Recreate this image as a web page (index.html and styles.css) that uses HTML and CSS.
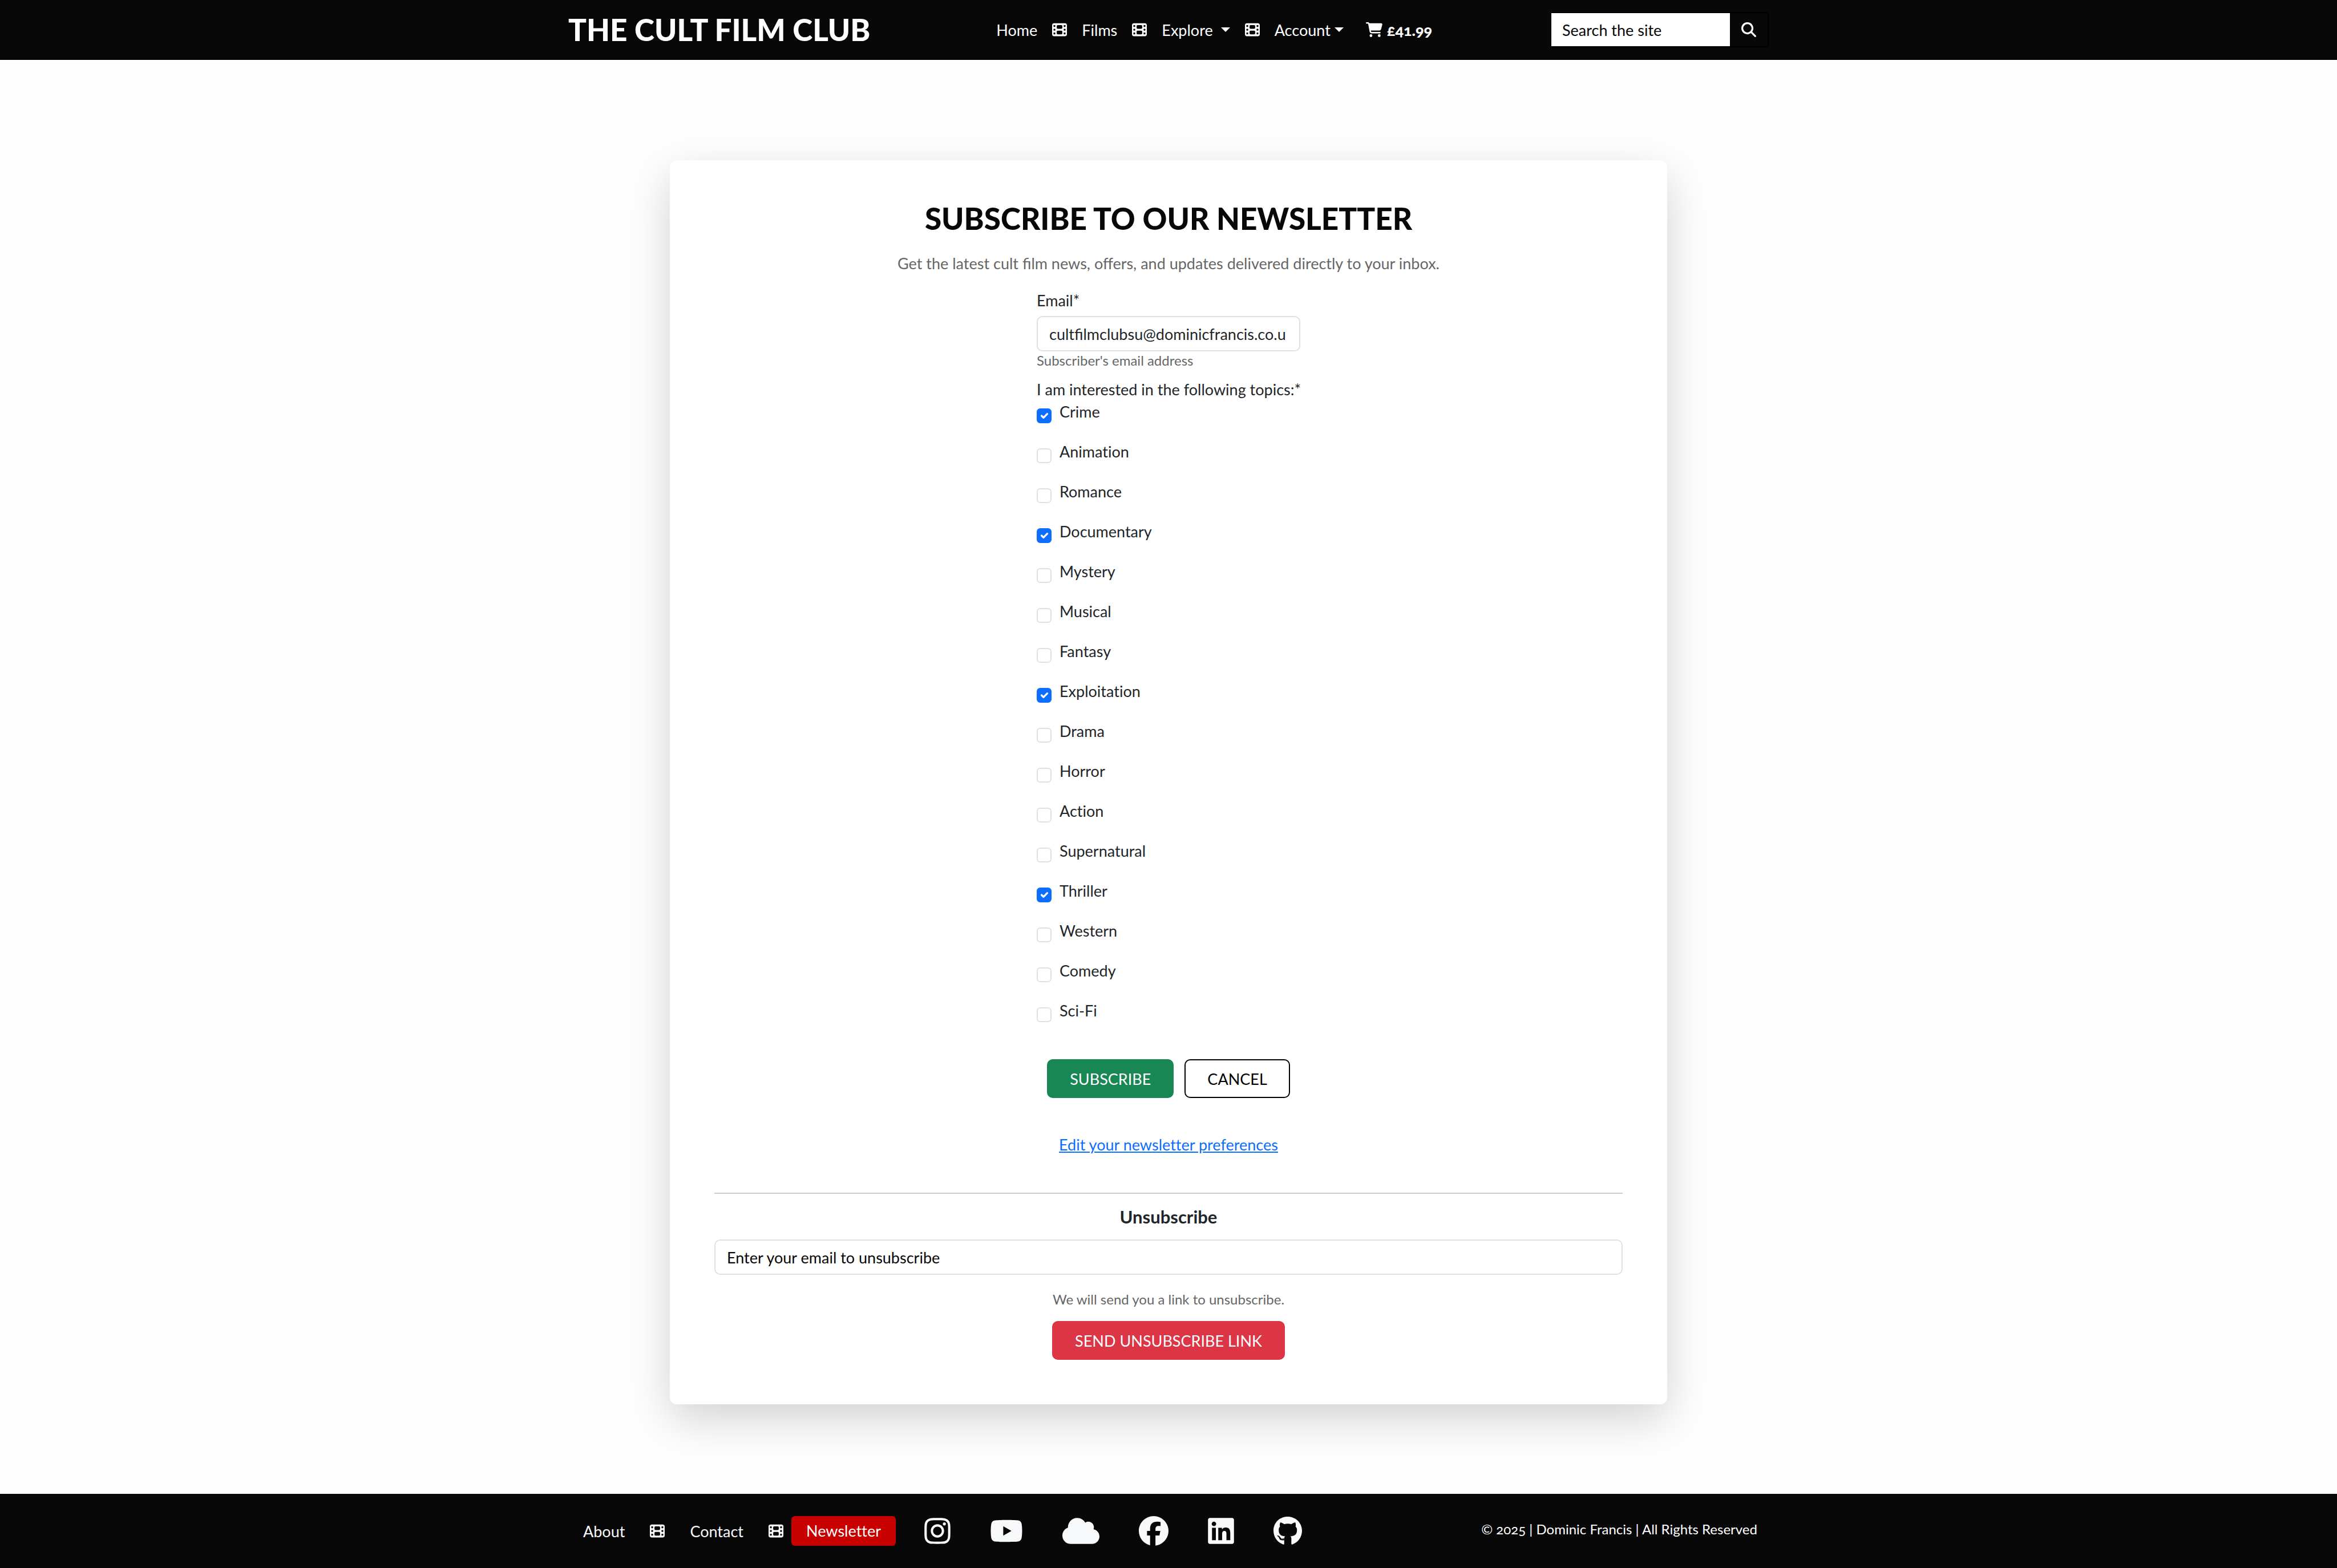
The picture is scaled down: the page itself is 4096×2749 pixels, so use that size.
FILE: index.html
```html
<!DOCTYPE html>
<html lang="en">
<head>
<meta charset="utf-8">
<meta name="viewport" content="width=device-width, initial-scale=1">
<title>Newsletter | The Cult Film Club</title>
<link rel="stylesheet" href="styles.css">
</head>
<body>
<svg class="sprite" aria-hidden="true">
  <symbol id="film" viewBox="0 0 512 512"><path fill-rule="evenodd" d="M0 96C0 60.700 28.700 32 64 32H448c35.300 0 64 28.700 64 64V416c0 35.300-28.700 64-64 64H64c-35.300 0-64-28.700-64-64V96zM48 368v32c0 8.800 7.200 16 16 16H96c8.800 0 16-7.200 16-16V368c0-8.800-7.200-16-16-16H64c-8.800 0-16 7.200-16 16zM416 352c-8.800 0-16 7.200-16 16v32c0 8.800 7.200 16 16 16h32c8.800 0 16-7.200 16-16V368c0-8.800-7.200-16-16-16H416zM48 240v32c0 8.800 7.200 16 16 16H96c8.800 0 16-7.200 16-16V240c0-8.800-7.200-16-16-16H64c-8.800 0-16 7.200-16 16zM416 224c-8.800 0-16 7.200-16 16v32c0 8.800 7.200 16 16 16h32c8.800 0 16-7.200 16-16V240c0-8.800-7.200-16-16-16H416zM48 112v32c0 8.800 7.200 16 16 16H96c8.800 0 16-7.200 16-16V112c0-8.800-7.200-16-16-16H64c-8.800 0-16 7.200-16 16zM416 96c-8.800 0-16 7.200-16 16v32c0 8.800 7.200 16 16 16h32c8.800 0 16-7.200 16-16V112c0-8.800-7.200-16-16-16H416zM160 128v64c0 17.700 14.300 32 32 32H320c17.700 0 32-14.300 32-32V128c0-17.700-14.300-32-32-32H192c-17.700 0-32 14.300-32 32zM192 288c-17.700 0-32 14.300-32 32v64c0 17.700 14.300 32 32 32H320c17.700 0 32-14.300 32-32V320c0-17.700-14.300-32-32-32H192z"/></symbol>
  <symbol id="cart" viewBox="0 0 576 512"><path d="M0 24C0 10.700 10.700 0 24 0H69.500c22 0 41.500 12.800 50.600 32h411c26.300 0 45.500 25 38.600 50.400l-41 152.300c-8.500 31.400-37 53.300-69.500 53.300H170.700l5.400 28.500c2.200 11.300 12.100 19.500 23.600 19.500H488c13.300 0 24 10.700 24 24s-10.700 24-24 24H199.700c-34.600 0-64.300-24.600-70.700-58.500L77.400 54.500c-.7-3.800-4-6.500-7.900-6.500H24C10.700 48 0 37.300 0 24zM128 464a48 48 0 1 1 96 0 48 48 0 1 1 -96 0zm336-48a48 48 0 1 1 0 96 48 48 0 1 1 0-96z"/></symbol>
  <symbol id="search" viewBox="0 0 512 512"><path fill-rule="evenodd" d="M416 208c0 45.900-14.900 88.300-40 122.700L502.600 457.400c12.500 12.500 12.500 32.800 0 45.300s-32.800 12.500-45.300 0L330.700 376c-34.400 25.200-76.800 40-122.700 40C93.100 416 0 322.900 0 208S93.100 0 208 0S416 93.100 416 208zM208 352a144 144 0 1 0 0-288 144 144 0 1 0 0 288z"/></symbol>
  <symbol id="instagram" viewBox="0 0 448 512"><path d="M224.100 141c-63.600 0-114.900 51.300-114.900 114.900s51.300 114.900 114.900 114.900S339 319.500 339 255.900 287.700 141 224.100 141zm0 189.600c-41.100 0-74.700-33.500-74.700-74.700s33.500-74.700 74.700-74.700 74.700 33.500 74.700 74.700-33.600 74.700-74.700 74.700zm146.400-194.300c0 14.900-12 26.800-26.800 26.800-14.900 0-26.800-12-26.800-26.800s12-26.800 26.800-26.800 26.800 12 26.800 26.800zm76.100 27.200c-1.700-35.900-9.900-67.700-36.200-93.900-26.200-26.200-58-34.400-93.900-36.200-37-2.100-147.900-2.100-184.900 0-35.800 1.700-67.600 9.900-93.900 36.100s-34.400 58-36.200 93.900c-2.100 37-2.100 147.900 0 184.900 1.700 35.900 9.900 67.700 36.200 93.900s58 34.400 93.900 36.200c37 2.100 147.900 2.100 184.900 0 35.900-1.700 67.700-9.900 93.900-36.200 26.200-26.200 34.400-58 36.200-93.900 2.100-37 2.100-147.800 0-184.800zM398.800 388c-7.800 19.600-22.900 34.700-42.600 42.600-29.500 11.700-99.500 9-132.100 9s-102.700 2.600-132.100-9c-19.600-7.800-34.700-22.900-42.600-42.600-11.700-29.500-9-99.500-9-132.100s-2.600-102.700 9-132.100c7.800-19.600 22.900-34.700 42.600-42.600 29.500-11.700 99.500-9 132.100-9s102.700-2.600 132.100 9c19.600 7.800 34.700 22.900 42.600 42.600 11.700 29.500 9 99.500 9 132.100s2.700 102.700-9 132.100z"/></symbol>
  <symbol id="youtube" viewBox="0 0 576 512"><path d="M549.655 124.083c-6.281-23.650-24.787-42.276-48.284-48.597C458.781 64 288 64 288 64S117.220 64 74.629 75.486c-23.497 6.322-42.003 24.947-48.284 48.597-11.412 42.867-11.412 132.305-11.412 132.305s0 89.438 11.412 132.305c6.281 23.650 24.787 41.500 48.284 47.821C117.220 448 288 448 288 448s170.780 0 213.371-11.486c23.497-6.321 42.003-24.171 48.284-47.821 11.412-42.867 11.412-132.305 11.412-132.305s0-89.438-11.412-132.305zm-317.510 213.508V175.185l142.739 81.205-142.739 81.201z"/></symbol>
  <symbol id="cloud" viewBox="0 0 640 512"><path d="M0 336c0 79.500 64.500 144 144 144H512c70.700 0 128-57.300 128-128c0-61.900-44-113.600-102.400-125.400c4.100-10.700 6.400-22.400 6.400-34.600c0-53-43-96-96-96c-19.700 0-38.100 6-53.300 16.200C367 64.200 315.300 32 256 32C167.600 32 96 103.600 96 192c0 2.700 .1 5.400 .2 8.100C40.200 219.800 0 273.200 0 336z"/></symbol>
  <symbol id="facebook" viewBox="0 0 512 512"><path d="M512 256C512 114.600 397.400 0 256 0S0 114.600 0 256C0 376 82.700 476.800 194.200 504.500V334.200H141.400V256h52.800V222.300c0-87.100 39.400-127.500 125-127.500c16.200 0 44.200 3.200 55.700 6.400V172c-6-.6-16.500-1-29.600-1c-42 0-58.200 15.900-58.200 57.200V256h83.600l-14.400 78.200H287V510.100C413.800 494.800 512 386.900 512 256h0z"/></symbol>
  <symbol id="linkedin" viewBox="0 0 448 512"><path d="M416 32H31.900C14.300 32 0 46.500 0 64.300v383.400C0 465.500 14.300 480 31.900 480H416c17.600 0 32-14.500 32-32.300V64.300c0-17.800-14.400-32.300-32-32.300zM135.400 416H69V202.200h66.500V416zm-33.200-243c-21.300 0-38.500-17.300-38.500-38.500S80.900 96 102.200 96c21.200 0 38.500 17.300 38.500 38.500 0 21.300-17.200 38.500-38.500 38.500zm282.100 243h-66.400V312c0-24.800-.5-56.700-34.500-56.700-34.600 0-39.900 27-39.900 54.900V416h-66.400V202.200h63.700v29.200h.9c8.900-16.800 30.600-34.500 62.900-34.500 67.200 0 79.700 44.300 79.700 101.900V416z"/></symbol>
  <symbol id="github" viewBox="0 0 496 512"><path d="M165.900 397.400c0 2-2.300 3.600-5.200 3.600-3.300.3-5.600-1.300-5.600-3.600 0-2 2.300-3.600 5.200-3.600 3-.3 5.600 1.300 5.600 3.600zm-31.100-4.500c-.7 2 1.300 4.300 4.300 4.900 2.600 1 5.600 0 6.200-2s-1.300-4.300-4.300-5.200c-2.600-.7-5.500.3-6.200 2.300zm44.200-1.700c-2.900.7-4.900 2.600-4.600 4.900.3 2 2.900 3.300 5.900 2.600 2.900-.7 4.900-2.600 4.600-4.600-.3-1.900-3-3.200-5.900-2.900zM244.800 8C106.100 8 0 113.300 0 252c0 110.900 69.800 205.800 169.500 239.200 12.800 2.300 17.300-5.600 17.300-12.100 0-6.200-.3-40.400-.3-61.400 0 0-70 15-84.700-29.800 0 0-11.400-29.100-27.800-36.600 0 0-22.900-15.700 1.600-15.400 0 0 24.900 2 38.600 25.800 21.900 38.600 58.600 27.500 72.900 20.900 2.300-16 8.800-27.100 16-33.700-55.900-6.200-112.300-14.300-112.300-110.500 0-27.500 7.600-41.300 23.600-58.900-2.600-6.500-11.100-33.300 2.600-67.900 20.900-6.500 69 27 69 27 20-5.600 41.500-8.500 62.800-8.500s42.800 2.900 62.800 8.500c0 0 48.100-33.600 69-27 13.700 34.700 5.200 61.400 2.600 67.900 16 17.700 25.800 31.500 25.800 58.900 0 96.500-58.900 104.200-114.800 110.500 9.200 7.900 17 22.900 17 46.400 0 33.700-.3 75.400-.3 83.600 0 6.500 4.600 14.400 17.300 12.100C428.200 457.800 496 362.900 496 252 496 113.300 383.500 8 244.800 8z"/></symbol>
</svg>

<header class="site-header">
  <div class="container header-row">
    <a class="brand" href="#">THE CULT FILM CLUB</a>
    <nav class="main-nav" aria-label="Main">
      <a href="#">Home</a>
      <svg class="icon film" aria-hidden="true"><use href="#film"/></svg>
      <a href="#">Films</a>
      <svg class="icon film" aria-hidden="true"><use href="#film"/></svg>
      <a class="dropdown wide" href="#">Explore</a>
      <svg class="icon film" aria-hidden="true"><use href="#film"/></svg>
      <a class="dropdown" href="#">Account</a>
      <a class="basket" href="#"><svg class="icon cart" aria-hidden="true"><use href="#cart"/></svg>£41.99</a>
    </nav>
    <form class="search">
      <input type="search" placeholder="Search the site" aria-label="Search the site">
      <button type="button" aria-label="Search"><svg class="icon" aria-hidden="true"><use href="#search"/></svg></button>
    </form>
  </div>
</header>

<main class="page">
  <section class="card">
    <h1>SUBSCRIBE TO OUR NEWSLETTER</h1>
    <p class="lead">Get the latest cult film news, offers, and updates delivered directly to your inbox.</p>
    <form class="subscribe">
      <label class="field-label" for="email">Email*</label>
      <input class="text-input" id="email" type="email" value="cultfilmclubsu@dominicfrancis.co.u">
      <p class="help">Subscriber's email address</p>
      <fieldset class="topics">
        <legend>I am interested in the following topics:*</legend>
        <div class="topic"><input type="checkbox" id="t1" checked><label for="t1">Crime</label></div>
        <div class="topic"><input type="checkbox" id="t2"><label for="t2">Animation</label></div>
        <div class="topic"><input type="checkbox" id="t3"><label for="t3">Romance</label></div>
        <div class="topic"><input type="checkbox" id="t4" checked><label for="t4">Documentary</label></div>
        <div class="topic"><input type="checkbox" id="t5"><label for="t5">Mystery</label></div>
        <div class="topic"><input type="checkbox" id="t6"><label for="t6">Musical</label></div>
        <div class="topic"><input type="checkbox" id="t7"><label for="t7">Fantasy</label></div>
        <div class="topic"><input type="checkbox" id="t8" checked><label for="t8">Exploitation</label></div>
        <div class="topic"><input type="checkbox" id="t9"><label for="t9">Drama</label></div>
        <div class="topic"><input type="checkbox" id="t10"><label for="t10">Horror</label></div>
        <div class="topic"><input type="checkbox" id="t11"><label for="t11">Action</label></div>
        <div class="topic"><input type="checkbox" id="t12"><label for="t12">Supernatural</label></div>
        <div class="topic"><input type="checkbox" id="t13" checked><label for="t13">Thriller</label></div>
        <div class="topic"><input type="checkbox" id="t14"><label for="t14">Western</label></div>
        <div class="topic"><input type="checkbox" id="t15"><label for="t15">Comedy</label></div>
        <div class="topic"><input type="checkbox" id="t16"><label for="t16">Sci-Fi</label></div>
      </fieldset>
      <div class="actions">
        <button class="btn btn-green" type="button">SUBSCRIBE</button>
        <button class="btn btn-outline" type="button">CANCEL</button>
      </div>
    </form>
    <a class="edit-link" href="#">Edit your newsletter preferences</a>
    <hr>
    <form class="unsubscribe">
      <h2>Unsubscribe</h2>
      <input class="text-input" type="email" placeholder="Enter your email to unsubscribe" aria-label="Enter your email to unsubscribe">
      <p class="help">We will send you a link to unsubscribe.</p>
      <button class="btn btn-red" type="button">SEND UNSUBSCRIBE LINK</button>
    </form>
  </section>
</main>

<footer class="site-footer">
  <div class="container footer-row">
    <nav class="footer-nav" aria-label="Footer">
      <a href="#">About</a>
      <svg class="icon film" aria-hidden="true"><use href="#film"/></svg>
      <a href="#">Contact</a>
      <svg class="icon film" aria-hidden="true"><use href="#film"/></svg>
      <a class="current" href="#">Newsletter</a>
    </nav>
    <div class="social">
      <a href="#" aria-label="Instagram"><svg class="w-46" aria-hidden="true"><use href="#instagram"/></svg></a>
      <a href="#" aria-label="YouTube"><svg class="w-58" aria-hidden="true"><use href="#youtube"/></svg></a>
      <a href="#" aria-label="Bluesky"><svg class="w-65" aria-hidden="true"><use href="#cloud"/></svg></a>
      <a href="#" aria-label="Facebook"><svg class="w-52" aria-hidden="true"><use href="#facebook"/></svg></a>
      <a href="#" aria-label="LinkedIn"><svg class="w-46" aria-hidden="true"><use href="#linkedin"/></svg></a>
      <a href="#" aria-label="GitHub"><svg class="w-50" aria-hidden="true"><use href="#github"/></svg></a>
    </div>
    <p class="copyright">© 2025 | Dominic Francis | All Rights Reserved</p>
  </div>
</footer>
</body>
</html>
```

FILE: styles.css
```css
*, *::before, *::after { box-sizing: border-box; }

body {
  margin: 0;
  min-height: 100vh;
  display: flex;
  flex-direction: column;
  background: #fefefe;
  color: #212529;
  font-family: Lato, "Liberation Sans", sans-serif;
  font-size: 27px;
  line-height: 39px;
  font-variant-numeric: oldstyle-nums;
  font-variant-ligatures: no-common-ligatures;
}

h1, h2, p { margin: 0; }
a { color: inherit; text-decoration: none; }
input, button { font: inherit; color: inherit; margin: 0; }
.sprite { display: none; }
.icon { width: 26px; height: 26px; fill: currentColor; flex: none; }

.container {
  width: 100%;
  max-width: 2144px;
  margin: 0 auto;
  padding: 0 20px;
  display: flex;
  align-items: center;
}

/* Header */
.site-header {
  background: #080808;
  color: #fff;
  border-bottom: 1px solid #000;
}
.header-row { height: 104px; justify-content: space-between; }
.brand { font-size: 53px; line-height: 78px; font-weight: 900; }
.main-nav { display: flex; align-items: center; gap: 26px; padding-left: 14px; }
.dropdown { display: flex; align-items: center; gap: 7px; }
.dropdown.wide { gap: 14px; }
.dropdown::after {
  content: "";
  border: 8px solid transparent;
  border-top-color: currentColor;
  border-bottom: 0;
}
.basket { display: flex; align-items: center; gap: 8px; margin-left: 13px; font-weight: 900; }
.cart { width: 29px; }

.search { display: flex; border: 2px solid #000; }
.search input {
  width: 313px;
  height: 58px;
  padding: 0 19px;
  border: 0;
  border-radius: 0;
  background: #fff;
  appearance: none;
}
.search input::placeholder, .text-input::placeholder { color: #080808; opacity: 1; }
.search button {
  width: 66px;
  border: 0;
  padding: 0;
  background: #080808;
  color: #fff;
  display: flex;
  align-items: center;
  justify-content: center;
}

/* Card */
.page { flex: 1; padding: 176px 40px 155px; }
.card {
  width: 100%;
  max-width: 1748px;
  margin: 0 auto;
  padding: 78px;
  display: flex;
  flex-direction: column;
  align-items: center;
  background: #fff;
  border-radius: 12px;
  box-shadow: 0 26px 78px rgba(0, 0, 0, .175);
}
h1 { font-size: 53px; line-height: 48px; font-weight: 900; color: #080808; text-align: center; }
.lead { margin-top: 35px; color: #666; text-align: center; }
.lead, .subscribe .text-input { font-variant-ligatures: normal; }

.subscribe { width: 462px; margin-top: 26px; }
.field-label { display: block; margin-bottom: 8px; }
.text-input {
  display: block;
  width: 100%;
  height: 62px;
  padding: 0 20px;
  border: 2px solid #dee2e6;
  border-radius: 10px;
  background: #fff;
}
.help { font-size: 24px; line-height: 32px; color: #666; }

.topics { margin: 15px 0 0; padding: 0; border: 0; min-width: 0; }
.topics legend { padding: 0; white-space: nowrap; }
.topic { display: flex; align-items: flex-start; gap: 14px; height: 70px; }
.topic input {
  appearance: none;
  width: 26px;
  height: 26px;
  margin-top: 14px;
  border: 2px solid #dee2e6;
  border-radius: 6px;
  background: #fff;
}
.topic input:checked {
  border-color: #0d6efd;
  background: #0d6efd url("data:image/svg+xml,%3Csvg xmlns='http://www.w3.org/2000/svg' viewBox='0 0 20 20'%3E%3Cpath fill='none' stroke='%23fff' stroke-linecap='round' stroke-linejoin='round' stroke-width='3' d='m6 10 3 3 6-6'/%3E%3C/svg%3E") center / contain no-repeat;
}

.actions { display: flex; justify-content: center; gap: 19px; margin-top: 35px; }
.btn {
  height: 68px;
  padding: 0 38px;
  border: 2px solid transparent;
  border-radius: 10px;
  white-space: nowrap;
}
.btn-green { background: #198754; color: #fff; }
.btn-outline { background: #fff; color: #000; border-color: #000; }
.btn-red { background: #dc3545; color: #fff; }

.edit-link { margin-top: 62px; color: #0d6efd; text-decoration: underline; }
hr { width: 100%; margin: 65px 0 22px; border: 0; border-top: 2px solid #ccc; }

.unsubscribe { width: 100%; display: flex; flex-direction: column; align-items: center; }
h2 { font-size: 31px; line-height: 36px; font-weight: 700; margin-bottom: 22px; }
.unsubscribe .help { margin: 27px 0 22px; }

/* Footer */
.site-footer { background: #080808; color: #f8f9fa; }
.footer-row { height: 130px; }
.footer-nav { display: flex; align-items: center; gap: 44px; padding-left: 26px; }
.footer-nav .current {
  height: 52px;
  margin-left: -30px;
  padding: 6px 26px;
  border-radius: 6px;
  background: #c80000;
  color: #fff;
}
.social { display: flex; align-items: center; gap: 69px; margin-left: 50px; }
.social a { display: flex; }
.social svg { height: 52px; fill: currentColor; }
.w-46 { width: 46px; }
.w-50 { width: 50px; }
.w-52 { width: 52px; }
.w-58 { width: 58px; }
.w-65 { width: 65px; }
.copyright { margin-left: auto; padding: 0 20px 6px 0; font-size: 24px; line-height: 32px; color: #fff; }
```
